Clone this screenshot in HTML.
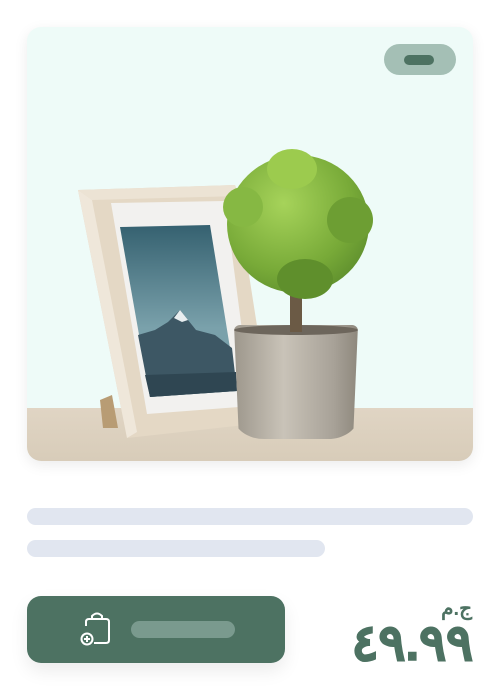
<!DOCTYPE html>
<html><head><meta charset="utf-8"><style>
body{margin:0;width:500px;height:690px;background:#fff;position:relative;overflow:hidden;font-family:"Liberation Sans","Noto Sans CJK SC",sans-serif}
.a{position:absolute}
</style></head><body>
<div class="a" style="left:27px;top:27px;width:446px;height:434px;border-radius:14px;overflow:hidden;background:#eefbf8;box-shadow:0 4px 14px rgba(0,0,0,0.08)">
  <div class="a" style="left:0;top:381px;width:446px;height:53px;background:linear-gradient(#e0d5c4,#d8ccb9)"></div>
  <svg class="a" style="left:-27px;top:-27px" width="500" height="490">
    <polygon points="100,400 112,395 118,428 103,428" fill="#b89c74"/>
    <polygon points="78,190 235,185 272,422 127,438" fill="#e4d8c5"/>
    <polygon points="78,190 235,185 240,196 92,200" fill="#ece3d4"/>
    <polygon points="78,190 92,200 137,432 127,438" fill="#efe7da"/>
    <polygon points="111,203 225,201 252,406 147,414" fill="#f2f1ef"/>
    <defs><linearGradient id="g" x1="0" y1="0" x2="0" y2="1"><stop offset="0" stop-color="#356170"/><stop offset="0.6" stop-color="#7aa1ab"/></linearGradient></defs>
    <polygon points="120,227 210,225 237,391 150,397" fill="url(#g)"/>
    <polygon points="138,335 155,330 168,322 180,310 196,330 215,335 232,348 237,391 150,397" fill="#3d5764"/>
    <polygon points="174,318 180,310 188,320 182,322" fill="#e8eef0"/>
    <polygon points="145,375 236,372 237,391 150,397" fill="#2f4652"/>
  </svg>
  <!-- pot -->
  <div class="a" style="left:207px;top:298px;width:124px;height:114px;background:linear-gradient(90deg,#9d978c,#c9c3b8 40%,#a8a298 80%,#8e887d);border-radius:6px 6px 30px 30px/6px 6px 22px 22px;clip-path:polygon(0 0,100% 0,96% 100%,4% 100%)"></div>
  <div class="a" style="left:207px;top:298px;width:124px;height:10px;background:#6d665c;border-radius:50%"></div>
  <div class="a" style="left:263px;top:250px;width:12px;height:55px;background:#6b5a45"></div>
  <!-- tree -->
  <div class="a" style="left:200px;top:128px;width:142px;height:138px;border-radius:50%;background:radial-gradient(circle at 40% 35%,#a6d35a,#78aa38 55%,#4b7a25)"></div>
  <div class="a" style="left:196px;top:160px;width:40px;height:40px;border-radius:50%;background:#86b843"></div>
  <div class="a" style="left:300px;top:170px;width:46px;height:46px;border-radius:50%;background:#6d9e33"></div>
  <div class="a" style="left:240px;top:122px;width:50px;height:40px;border-radius:50%;background:#9ccb4e"></div>
  <div class="a" style="left:250px;top:232px;width:56px;height:40px;border-radius:50%;background:#5f8f2c"></div>
  <!-- pill -->
  <div class="a" style="left:357px;top:17px;width:72px;height:31px;border-radius:16px;background:#a4bfb5"></div>
  <div class="a" style="left:377px;top:28px;width:30px;height:10px;border-radius:5px;background:#4d7262"></div>
</div>
<div class="a" style="left:27px;top:508px;width:446px;height:17px;border-radius:9px;background:#e1e6f0"></div>
<div class="a" style="left:27px;top:540px;width:298px;height:17px;border-radius:9px;background:#e1e6f0"></div>
<div class="a" style="left:27px;top:596px;width:258px;height:67px;border-radius:14px;background:#4d7262;box-shadow:0 8px 18px rgba(0,0,0,0.08)"></div>
<svg class="a" style="left:78px;top:612px" width="36" height="36" fill="none" stroke="#fff" stroke-width="2"><path d="M8 14 V10 Q8 7 11 7 H28 Q31 7 31 10 V28 Q31 31 28 31 H16"/><path d="M14 7 V4 Q19 -1 24 4 V7"/><circle cx="9" cy="27" r="5.5"/><path d="M9 24 V30 M6 27 H12"/></svg>
<div class="a" style="left:131px;top:621px;width:104px;height:17px;border-radius:9px;background:#7a9a8e"></div>
<div class="a" style="right:28px;top:596px;font-size:20px;font-weight:bold;color:#4d7262">ج.م</div>
<div class="a" style="right:27px;top:616px;font-size:50px;font-weight:bold;color:#4d7262;line-height:54px;letter-spacing:1px;-webkit-text-stroke:1.5px #4d7262">٤٩.٩٩</div>
</body></html>
